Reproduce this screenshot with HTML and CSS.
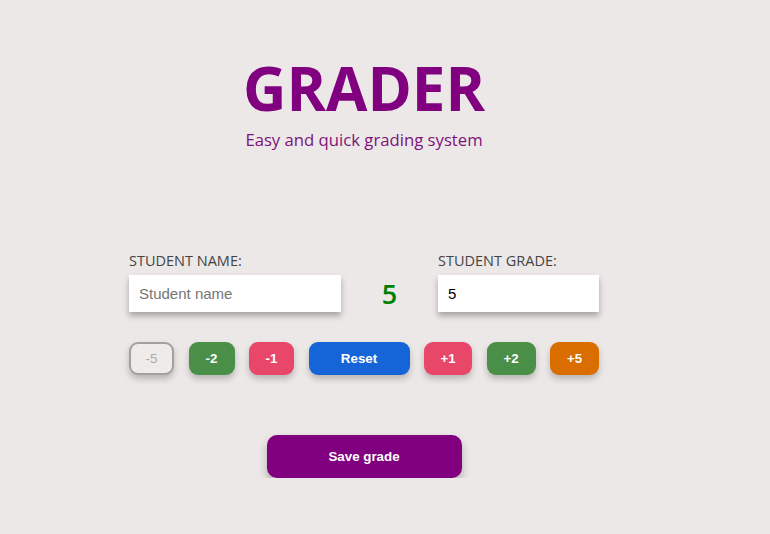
FILE: index.html
```html
<!DOCTYPE html>
<html lang="en">
<head>
<meta charset="utf-8">
<title>Grader</title>
<link rel="stylesheet" href="styles.css">
</head>
<body>
<main class="app">
  <header class="hero">
    <h1 class="title">GRADER</h1>
    <p class="subtitle">Easy and quick grading system</p>
  </header>
  <section class="form-row">
    <div class="field field-name">
      <label class="label" for="name">STUDENT NAME:</label>
      <input class="input" id="name" type="text" placeholder="Student name">
    </div>
    <div class="grade-display">5</div>
    <div class="field field-grade">
      <label class="label" for="grade">STUDENT GRADE:</label>
      <input class="input" id="grade" type="text" value="5">
    </div>
  </section>
  <section class="buttons">
    <button class="btn btn-disabled" disabled>-5</button>
    <button class="btn btn-green">-2</button>
    <button class="btn btn-red">-1</button>
    <button class="btn btn-blue btn-reset">Reset</button>
    <button class="btn btn-red btn-wide">+1</button>
    <button class="btn btn-green btn-wide">+2</button>
    <button class="btn btn-orange">+5</button>
  </section>
  <div class="save-wrap">
    <button class="btn-save">Save grade</button>
  </div>
</main>
</body>
</html>
```
FILE: styles.css
```css
html, body {
  margin: 0;
  padding: 0;
  background: #ece8e7;
}
body {
  font-family: "Open Sans", "Noto Sans", sans-serif;
}
.app {
  width: 470px;
  margin-left: 129px;
  padding-top: 51px;
}
.hero {
  display: flex;
  flex-direction: column;
  align-items: center;
}
.title {
  margin: 0;
  font-size: 60px;
  line-height: 74px;
  font-weight: 700;
  color: #800080;
}
.subtitle {
  margin: 3px 0 0;
  font-size: 16.7px;
  line-height: 24px;
  color: #7d127d;
}
.form-row {
  margin-top: 99px;
  display: flex;
  align-items: flex-end;
}
.field {
  display: flex;
  flex-direction: column;
}
.label {
  font-size: 14.5px;
  line-height: 20px;
  color: #444;
  margin-bottom: 4px;
}
.input {
  box-sizing: border-box;
  height: 37px;
  border: none;
  outline: none;
  background: #fff;
  padding: 0 10px;
  font-family: "Liberation Sans", Arial, sans-serif;
  font-size: 15px;
  color: #000;
  box-shadow: 0 4px 6px rgba(0,0,0,0.3);
}
.input::placeholder {
  color: #757575;
}
.field-name .input { width: 212px; }
.field-grade .input { width: 161px; }
.grade-display {
  width: 97px;
  height: 37px;
  display: flex;
  align-items: center;
  justify-content: center;
  font-size: 27px;
  font-weight: 600;
  color: #008000;
}
.buttons {
  margin-top: 30px;
  display: flex;
  justify-content: space-between;
}
.btn {
  box-sizing: border-box;
  height: 33px;
  min-width: 45px;
  padding: 0 14px;
  border: none;
  border-radius: 9px;
  font-family: "Liberation Sans", Arial, sans-serif;
  font-size: 13.33px;
  font-weight: 700;
  color: #fff;
  box-shadow: 0 4px 6px rgba(0,0,0,0.22);
}
.btn-disabled {
  background: #efebeb;
  border: 2px solid #a3a09f;
  color: #aaa;
  font-weight: 400;
}
.btn-green { background: #4a8f48; width: 46px; }
.btn-red { background: #e8476a; width: 45px; }
.btn-blue { background: #1565d8; width: 101px; }
.btn-orange { background: #d96d00; width: 49px; }
.btn-wide { width: 48px; }
.btn-green.btn-wide { width: 49px; }
.save-wrap {
  margin-top: 60px;
  display: flex;
  justify-content: center;
}
.btn-save {
  width: 195px;
  height: 43px;
  border: none;
  border-radius: 10px;
  background: #800080;
  color: #fff;
  font-family: "Liberation Sans", Arial, sans-serif;
  font-size: 13.33px;
  font-weight: 700;
  box-shadow: 0 5px 8px rgba(0,0,0,0.25);
}
```
